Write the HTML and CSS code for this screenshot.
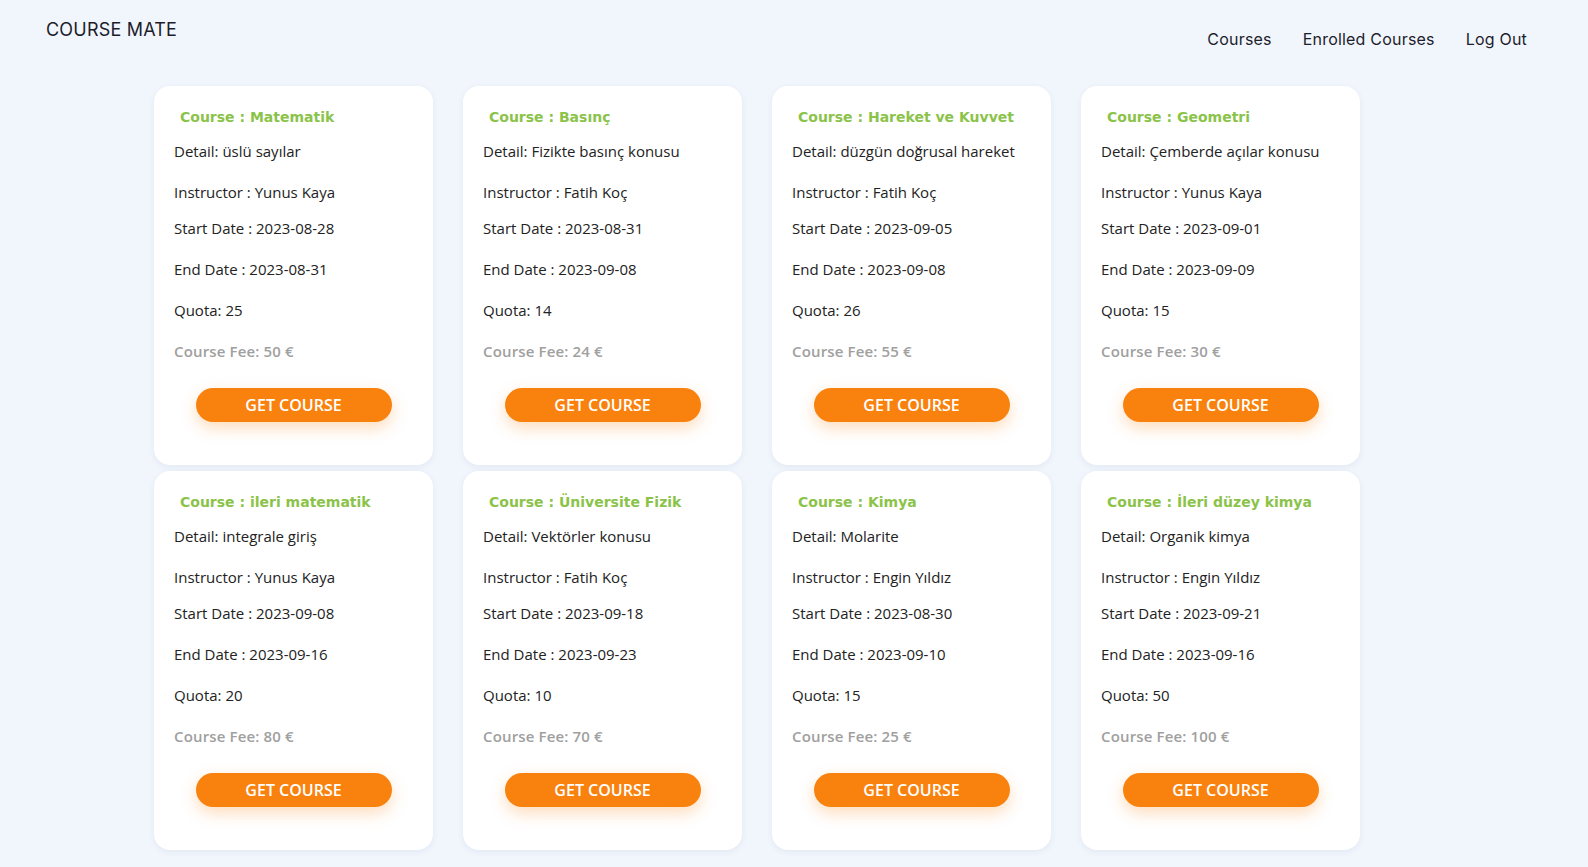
FILE: index.html
```html
<!DOCTYPE html>
<html lang="tr">
<head>
<meta charset="utf-8">
<title>Course Mate</title>
<link rel="stylesheet" href="styles.css">
</head>
<body>
<header class="topbar">
  <div class="brand">COURSE MATE</div>
  <nav class="nav">
    <a href="#">Courses</a>
    <a href="#">Enrolled Courses</a>
    <a href="#">Log Out</a>
  </nav>
</header>
<main class="grid">
  <div class="card">
    <div class="title">Course : Matematik</div>
    <div class="line l-detail">Detail: üslü sayılar</div>
    <div class="line l-instr">Instructor : Yunus Kaya</div>
    <div class="line l-start">Start Date : 2023-08-28</div>
    <div class="line l-end">End Date : 2023-08-31</div>
    <div class="line l-quota">Quota: 25</div>
    <div class="line fee">Course Fee: 50 €</div>
    <button class="btn">GET COURSE</button>
  </div>
  <div class="card">
    <div class="title">Course : Basınç</div>
    <div class="line l-detail">Detail: Fizikte basınç konusu</div>
    <div class="line l-instr">Instructor : Fatih Koç</div>
    <div class="line l-start">Start Date : 2023-08-31</div>
    <div class="line l-end">End Date : 2023-09-08</div>
    <div class="line l-quota">Quota: 14</div>
    <div class="line fee">Course Fee: 24 €</div>
    <button class="btn">GET COURSE</button>
  </div>
  <div class="card">
    <div class="title">Course : Hareket ve Kuvvet</div>
    <div class="line l-detail">Detail: düzgün doğrusal hareket</div>
    <div class="line l-instr">Instructor : Fatih Koç</div>
    <div class="line l-start">Start Date : 2023-09-05</div>
    <div class="line l-end">End Date : 2023-09-08</div>
    <div class="line l-quota">Quota: 26</div>
    <div class="line fee">Course Fee: 55 €</div>
    <button class="btn">GET COURSE</button>
  </div>
  <div class="card">
    <div class="title">Course : Geometri</div>
    <div class="line l-detail">Detail: Çemberde açılar konusu</div>
    <div class="line l-instr">Instructor : Yunus Kaya</div>
    <div class="line l-start">Start Date : 2023-09-01</div>
    <div class="line l-end">End Date : 2023-09-09</div>
    <div class="line l-quota">Quota: 15</div>
    <div class="line fee">Course Fee: 30 €</div>
    <button class="btn">GET COURSE</button>
  </div>
  <div class="card">
    <div class="title">Course : ileri matematik</div>
    <div class="line l-detail">Detail: integrale giriş</div>
    <div class="line l-instr">Instructor : Yunus Kaya</div>
    <div class="line l-start">Start Date : 2023-09-08</div>
    <div class="line l-end">End Date : 2023-09-16</div>
    <div class="line l-quota">Quota: 20</div>
    <div class="line fee">Course Fee: 80 €</div>
    <button class="btn">GET COURSE</button>
  </div>
  <div class="card">
    <div class="title">Course : Üniversite Fizik</div>
    <div class="line l-detail">Detail: Vektörler konusu</div>
    <div class="line l-instr">Instructor : Fatih Koç</div>
    <div class="line l-start">Start Date : 2023-09-18</div>
    <div class="line l-end">End Date : 2023-09-23</div>
    <div class="line l-quota">Quota: 10</div>
    <div class="line fee">Course Fee: 70 €</div>
    <button class="btn">GET COURSE</button>
  </div>
  <div class="card">
    <div class="title">Course : Kimya</div>
    <div class="line l-detail">Detail: Molarite</div>
    <div class="line l-instr">Instructor : Engin Yıldız</div>
    <div class="line l-start">Start Date : 2023-08-30</div>
    <div class="line l-end">End Date : 2023-09-10</div>
    <div class="line l-quota">Quota: 15</div>
    <div class="line fee">Course Fee: 25 €</div>
    <button class="btn">GET COURSE</button>
  </div>
  <div class="card">
    <div class="title">Course : İleri düzey kimya</div>
    <div class="line l-detail">Detail: Organik kimya</div>
    <div class="line l-instr">Instructor : Engin Yıldız</div>
    <div class="line l-start">Start Date : 2023-09-21</div>
    <div class="line l-end">End Date : 2023-09-16</div>
    <div class="line l-quota">Quota: 50</div>
    <div class="line fee">Course Fee: 100 €</div>
    <button class="btn">GET COURSE</button>
  </div>
</main>
</body>
</html>
```

FILE: styles.css
```css
* { box-sizing: border-box; }

body {
  margin: 0;
  background: #f1f6fd;
  font-family: "Open Sans", "Noto Sans", sans-serif;
  color: #222;
  min-height: 867px;
}

.topbar {
  display: flex;
  justify-content: space-between;
  align-items: flex-start;
  padding: 19px 61px 0 46px;
  height: 86px;
}

.brand {
  font-family: Inter, sans-serif;
  font-size: 18px;
  line-height: 22px;
  color: #1d1d2b;
  letter-spacing: 0.2px;
}

.nav {
  display: flex;
  gap: 31px;
  padding-top: 10px;
}

.nav a {
  font-family: Inter, sans-serif;
  font-size: 16px;
  line-height: 20px;
  color: #1d1d2b;
  text-decoration: none;
  letter-spacing: 0.2px;
}

.grid {
  display: grid;
  grid-template-columns: repeat(4, 279px);
  column-gap: 30px;
  row-gap: 6px;
  padding-left: 154px;
}

.card {
  background: #fff;
  border-radius: 16px;
  box-shadow: 0 2px 6px rgba(40, 60, 100, 0.07);
  height: 379px;
  padding: 21px 20px 0 20px;
  display: flex;
  flex-direction: column;
  align-items: flex-start;
}

.title {
  font-family: "DejaVu Sans", sans-serif;
  font-weight: 700;
  font-size: 14px;
  line-height: 20px;
  color: #8bc34a;
  padding-left: 6px;
  white-space: nowrap;
}

.line {
  font-size: 15px;
  line-height: 20px;
  white-space: nowrap;
}

.l-detail { margin-top: 14px; }
.l-instr { margin-top: 21px; }
.l-start { margin-top: 16px; }
.l-end { margin-top: 21px; }
.l-quota { margin-top: 21px; }

.fee {
  margin-top: 21px;
  color: #a0a0a0;
  font-weight: 600;
  font-size: 15px;
  letter-spacing: 0.15px;
}

.btn {
  margin-top: 27px;
  align-self: center;
  width: 196px;
  height: 34px;
  border: none;
  border-radius: 17px;
  background: #f9820e;
  color: #fff;
  font-family: "Open Sans", "Noto Sans", sans-serif;
  font-weight: 600;
  font-size: 16px;
  box-shadow: 0 6px 16px rgba(249, 130, 14, 0.28);
  cursor: pointer;
}
```
